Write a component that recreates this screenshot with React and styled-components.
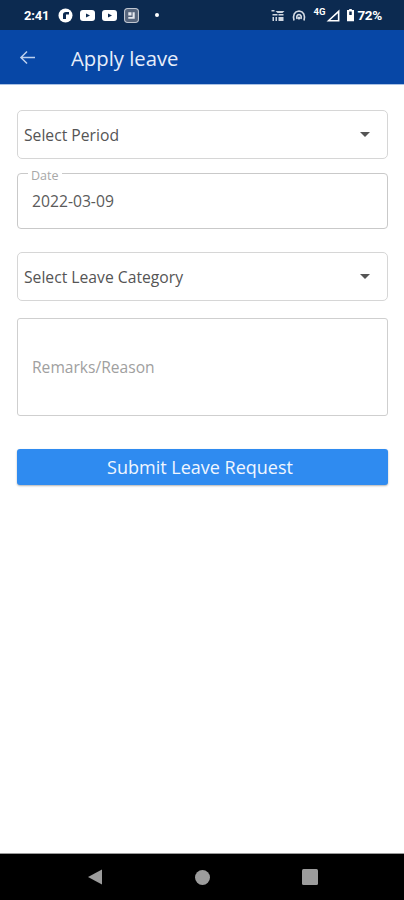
import React from 'react'
import styled, { createGlobalStyle } from 'styled-components'

const GlobalStyle = createGlobalStyle`
  html, body {
    margin: 0;
    padding: 0;
    background: #fff;
    font-family: 'Open Sans', 'Noto Sans', sans-serif;
  }
`
const Screen = styled.div`
  width: 404px;
  height: 900px;
  display: flex;
  flex-direction: column;
  overflow: hidden;
  background: #fff;
`
const StatusBar = styled.div`
  height: 30px;
  background: #0c2a50;
  color: #fff;
  display: flex;
  align-items: center;
  justify-content: space-between;
  padding: 0 22px 0 24px;
  font-family: 'Roboto', sans-serif;
  font-size: 12px;
  font-weight: 700;
`
const StatusGroup = styled.div`
  display: flex;
  align-items: center;
  gap: ${p => p.$gap || 7}px;
`
const Time = styled.span`
  font-size: 13px;
  margin-right: 2px;
  letter-spacing: -0.2px;
`
const DotSlot = styled.span`
  display: flex;
  margin-left: 7px;
`
const Battery = styled.span`
  font-size: 13.5px;
  letter-spacing: -0.3px;
`
const Tiny = styled.span`
  font-size: 9.5px;
  line-height: 9px;
  margin-right: -6px;
  margin-top: -7px;
`
const AppBar = styled.header`
  height: 55px;
  box-sizing: border-box;
  background: #0747a6;
  border-bottom: 1.5px solid #a9c1e4;
  display: flex;
  align-items: center;
  padding-left: 19px;
  color: #e6edf8;
`
const Title = styled.h1`
  margin: 2px 0 0 35px;
  font-size: 20.3px;
  font-weight: 500;
  color: #e8eefa;
`
const Form = styled.form`
  flex: 1;
  padding: 25px 16px 0 17px;
  display: flex;
  flex-direction: column;
`
const SelectBox = styled.div`
  height: 49px;
  box-sizing: border-box;
  margin-bottom: ${p => p.$after}px;
  border: 1.5px solid #d6d6d6;
  border-radius: 5px;
  display: flex;
  align-items: center;
  justify-content: space-between;
  padding: 0 17px 0 6px;
  font-size: 15.7px;
  color: #555;
`
const Caret = styled.span`
  width: 0;
  height: 0;
  border-left: 5px solid transparent;
  border-right: 5px solid transparent;
  border-top: 5px solid #555;
`
const DateField = styled.fieldset`
  height: 65px;
  box-sizing: border-box;
  margin: 0 0 23px;
  padding: 0 15px 0 10px;
  border: 1.5px solid #c9c9c9;
  border-radius: 4px;
  min-width: 0;
`
const DateLegend = styled.legend`
  padding: 6px 3px 0;
  margin-left: 0;
  font-size: 12.5px;
  line-height: 12px;
  color: #a8a8a8;
`
const DateValue = styled.div`
  margin: 8px 0 0 4px;
  font-size: 15.7px;
  line-height: 22px;
  color: #5a5a5a;
`
const Remarks = styled.div`
  height: 98px;
  box-sizing: border-box;
  margin-bottom: 33px;
  border: 1.5px solid #cfcfcf;
  border-radius: 3px;
  display: flex;
  align-items: center;
  padding: 0 15px 0 14px;
  font-size: 15.6px;
  color: #a0a0a0;
`
const SubmitButton = styled.button`
  height: 36px;
  border: none;
  border-radius: 3px;
  background: #2f8bf0;
  box-shadow: 0 1px 2px rgba(0, 0, 0, 0.3);
  color: #f0f6ff;
  font-family: inherit;
  font-size: 18px;
  padding: 0 5px 0 0;
`
const NavBar = styled.nav`
  height: 47px;
  background: #000;
  border-top: 1px solid #9a9a9a;
  box-sizing: border-box;
  display: flex;
  justify-content: space-between;
  align-items: center;
  padding: 0 86px 0 87px;
`

const Dot = () => (
  <svg width="8" height="8" viewBox="0 0 8 8"><circle cx="4" cy="4" r="2" fill="#fff" /></svg>
)
const RingIcon = () => (
  <svg width="15" height="15" viewBox="0 0 15 15">
    <circle cx="7.5" cy="7.5" r="7" fill="#fff" />
    <path d="M5 11V6.5Q5 4 8 4H11V6.5H8V11Z" fill="#0c2a50" />
  </svg>
)
const TubeIcon = () => (
  <svg width="15" height="11" viewBox="0 0 15 11">
    <rect width="15" height="11" rx="3" fill="#fff" />
    <path d="M6 3.5L10 5.5L6 7.5Z" fill="#0c2a50" />
  </svg>
)
const BoxIcon = () => (
  <svg width="15" height="15" viewBox="0 0 14 14">
    <rect x="0.5" y="0.5" width="13" height="13" rx="3" fill="#56657c" stroke="#c0c6d0" />
    <path d="M4 4H7V7H4ZM8 4H10V10H4V8.5H8Z" fill="#e5e8ee" />
  </svg>
)
const WifiCallIcon = () => (
  <svg width="14" height="13" viewBox="0 0 13 13" fill="#cfd6e0">
    <rect x="0" y="1" width="3" height="1.5" />
    <path d="M4 2H13L11 4H6Z" />
    <rect x="1" y="5" width="5" height="1.5" />
    <rect x="7" y="5" width="5" height="1.5" />
    <rect x="1" y="8" width="1.5" height="4" />
    <rect x="4" y="8" width="1.5" height="4" />
    <rect x="7" y="8" width="5" height="4" />
  </svg>
)
const HotspotIcon = () => (
  <svg width="14" height="13" viewBox="0 0 14 13" fill="none" stroke="#d5dbe4" strokeWidth="1.6">
    <path d="M2 11.5Q0 3 7 2Q14 3 12 11.5" />
    <path d="M5 10Q4 6 7 5.5Q10 6 9 10" />
    <circle cx="7" cy="9" r="0.8" fill="#d5dbe4" />
  </svg>
)
const SignalIcon = () => (
  <svg width="14" height="13" viewBox="0 0 13 12">
    <path d="M12.5 0.5V11.5H0.5ZM11 4L4 10.2H11Z" fill="#fff" fillRule="evenodd" />
  </svg>
)
const BatteryIcon = () => (
  <svg width="7" height="14" viewBox="0 0 8 14">
    <path d="M2.5 0H5.5V1.2H8V14H0V1.2H2.5Z" fill="#fff" />
    <rect x="2.6" y="3" width="2.8" height="4" fill="#0c2a50" />
  </svg>
)
const BackArrow = () => (
  <svg width="17" height="15" viewBox="0 0 18 16" fill="none" stroke="#bcd0ee" strokeWidth="1.6">
    <path d="M17 8H2M8.5 1.5L2 8L8.5 14.5" />
  </svg>
)
const NavBack = () => (
  <svg width="16" height="16" viewBox="0 0 16 16"><path d="M15 0.5V15.5L1 8Z" fill="#9c9c9c" /></svg>
)
const NavHome = () => (
  <svg width="15" height="15" viewBox="0 0 15 15"><circle cx="7.5" cy="7.5" r="7.5" fill="#9c9c9c" /></svg>
)
const NavRecent = () => (
  <svg width="16" height="16" viewBox="0 0 16 16"><rect width="16" height="16" rx="1.5" fill="#9c9c9c" /></svg>
)

const App = () => {
  return (
    <Screen>
      <GlobalStyle />
      <StatusBar>
        <StatusGroup>
          <Time>2:41</Time>
          <RingIcon />
          <TubeIcon />
          <TubeIcon />
          <BoxIcon />
          <DotSlot><Dot /></DotSlot>
        </StatusGroup>
        <StatusGroup $gap={7}>
          <WifiCallIcon />
          <HotspotIcon />
          <Tiny>4G</Tiny>
          <SignalIcon />
          <StatusGroup $gap={3}>
            <BatteryIcon />
            <Battery>72%</Battery>
          </StatusGroup>
        </StatusGroup>
      </StatusBar>
      <AppBar>
        <BackArrow />
        <Title>Apply leave</Title>
      </AppBar>
      <Form>
        <SelectBox $after={5}>
          Select Period
          <Caret />
        </SelectBox>
        <DateField>
          <DateLegend>Date</DateLegend>
          <DateValue>2022-03-09</DateValue>
        </DateField>
        <SelectBox $after={17}>
          Select Leave Category
          <Caret />
        </SelectBox>
        <Remarks>Remarks/Reason</Remarks>
        <SubmitButton type="button">Submit Leave Request</SubmitButton>
      </Form>
      <NavBar>
        <NavBack />
        <NavHome />
        <NavRecent />
      </NavBar>
    </Screen>
  )
}

export default App
